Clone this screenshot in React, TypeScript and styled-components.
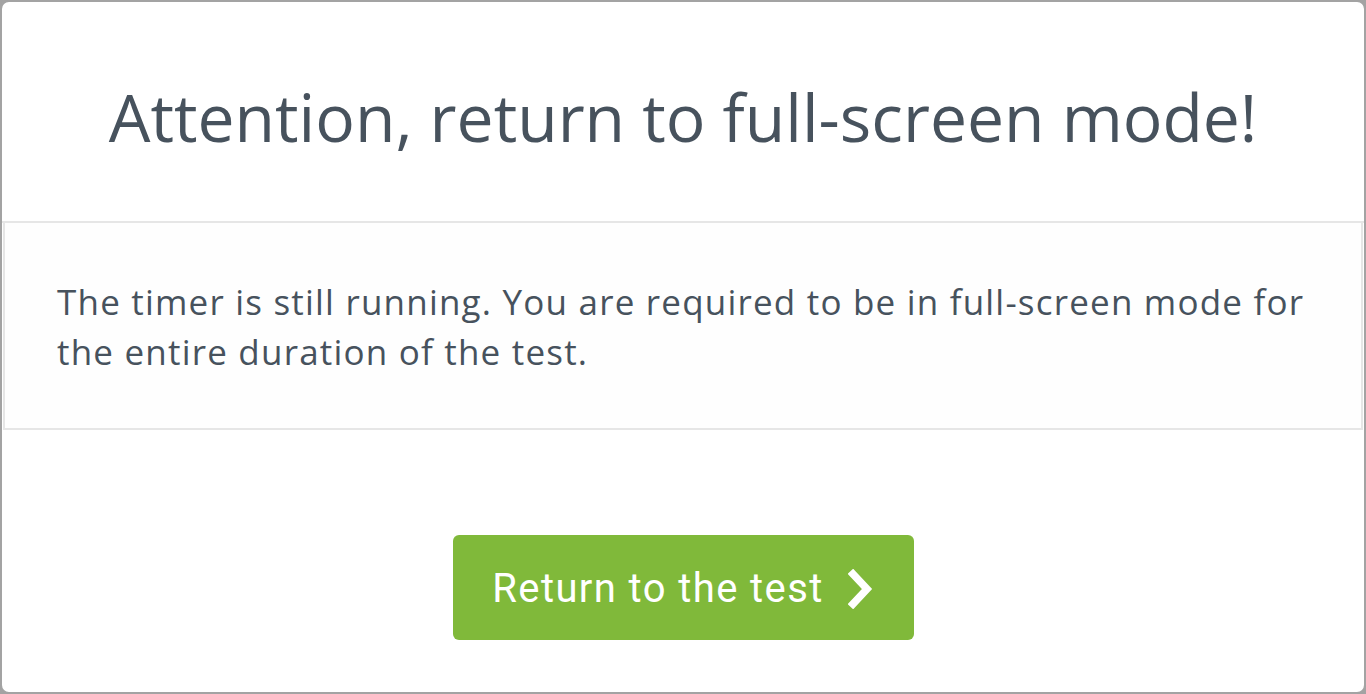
import React from "react";
import styled, { createGlobalStyle } from "styled-components";

const GlobalStyle = createGlobalStyle`
  html, body {
    margin: 0;
    padding: 0;
    background: #a3a3a3;
  }
  * {
    box-sizing: border-box;
  }
`;

const Modal = styled.div`
  width: 1366px;
  height: 694px;
  background: #ffffff;
  border: 2px solid #a3a3a3;
  border-radius: 9px;
  overflow: hidden;
  display: flex;
  flex-direction: column;
  font-family: "Open Sans", "Noto Sans", sans-serif;
  color: #47525d;
`;

const Header = styled.div`
  height: 221px;
  display: flex;
  align-items: center;
  justify-content: center;
  border-bottom: 2px solid #e6e6e6;
`;

const Title = styled.h1`
  margin: 0;
  padding-top: 10px;
  font-size: 66px;
  font-weight: 400;
  line-height: 1.2;
`;

const Body = styled.div`
  height: 207px;
  margin: 0 1px;
  padding: 54px 36px 0 52px;
  background: #fefefe;
  border: 2px solid #e6e6e6;
  border-top: none;
`;

const Message = styled.p`
  margin: 0;
  font-size: 35px;
  line-height: 50px;
  letter-spacing: 1.2px;
`;

const Footer = styled.div`
  flex: 1;
  display: flex;
  justify-content: center;
  padding-top: 105px;
`;

const Button = styled.button`
  height: 105px;
  width: 461px;
  display: flex;
  align-items: center;
  justify-content: center;
  gap: 24px;
  background: #80b93a;
  border: none;
  border-radius: 6px;
  color: #ffffff;
  font-family: Roboto, "Noto Sans", sans-serif;
  font-size: 40px;
  font-weight: 400;
  letter-spacing: 1.4px;
  padding: 2px 0 0 0;
  cursor: pointer;
`;

const Chevron = () => (
  <svg width="26" height="40" viewBox="0 0 26 40" fill="none">
    <path
      d="M5 5 L19 20 L5 35"
      stroke="#ffffff"
      strokeWidth="7.5"
      strokeLinecap="square"
      strokeLinejoin="miter"
    />
  </svg>
);

export default function App() {
  return (
    <>
      <GlobalStyle />
      <Modal>
        <Header>
          <Title>Attention, return to full-screen mode!</Title>
        </Header>
        <Body>
          <Message>
            The timer is still running. You are required to be in full-screen
            mode for the entire duration of the test.
          </Message>
        </Body>
        <Footer>
          <Button>
            Return to the test
            <Chevron />
          </Button>
        </Footer>
      </Modal>
    </>
  );
}
